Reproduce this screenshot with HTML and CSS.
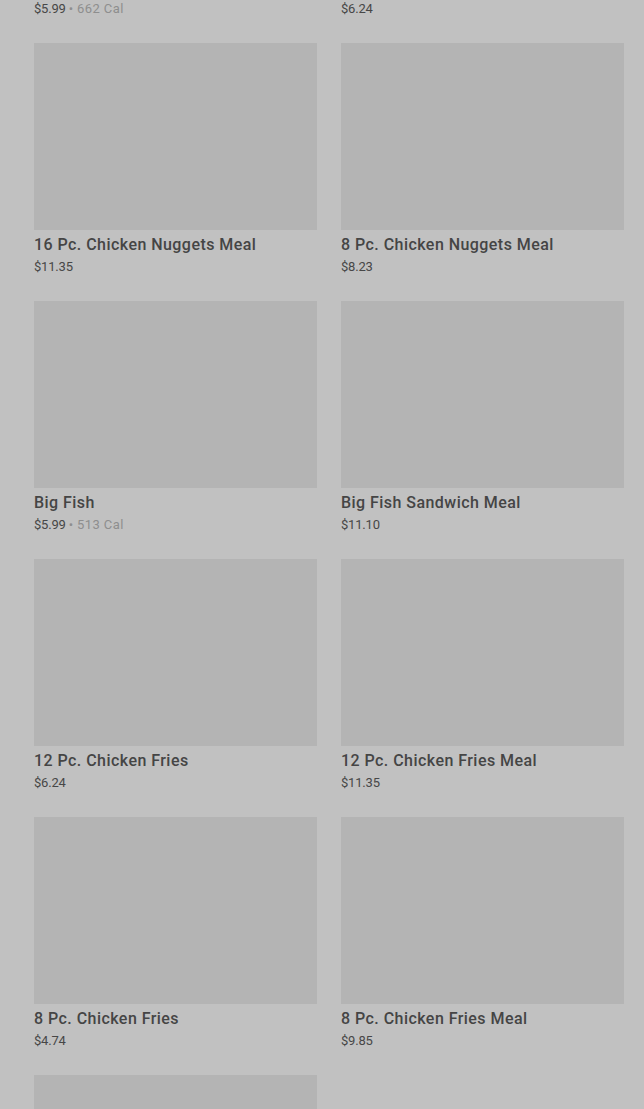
FILE: index.html
```html
<!DOCTYPE html>
<html>
  <head>
    <meta charset="utf-8" />
    <title>Menu</title>
    <link rel="stylesheet" href="styles.css">
  </head>

  <body>
    <div class="menu">
      <div class="item">
        <div class="thumb"></div>
        <div class="name">Original Chicken Sandwich</div>
        <div class="price">$5.99 <span class="cal">• 662 Cal</span></div>
      </div>
      <div class="item">
        <div class="thumb"></div>
        <div class="name">10 Pc. Chicken Nuggets</div>
        <div class="price">$6.24</div>
      </div>
      <div class="item">
        <div class="thumb"></div>
        <div class="name">16 Pc. Chicken Nuggets Meal</div>
        <div class="price">$11.35</div>
      </div>
      <div class="item">
        <div class="thumb"></div>
        <div class="name">8 Pc. Chicken Nuggets Meal</div>
        <div class="price">$8.23</div>
      </div>
      <div class="item">
        <div class="thumb"></div>
        <div class="name">Big Fish</div>
        <div class="price">$5.99 <span class="cal">• 513 Cal</span></div>
      </div>
      <div class="item">
        <div class="thumb"></div>
        <div class="name">Big Fish Sandwich Meal</div>
        <div class="price">$11.10</div>
      </div>
      <div class="item">
        <div class="thumb"></div>
        <div class="name">12 Pc. Chicken Fries</div>
        <div class="price">$6.24</div>
      </div>
      <div class="item">
        <div class="thumb"></div>
        <div class="name">12 Pc. Chicken Fries Meal</div>
        <div class="price">$11.35</div>
      </div>
      <div class="item">
        <div class="thumb"></div>
        <div class="name">8 Pc. Chicken Fries</div>
        <div class="price">$4.74</div>
      </div>
      <div class="item">
        <div class="thumb"></div>
        <div class="name">8 Pc. Chicken Fries Meal</div>
        <div class="price">$9.85</div>
      </div>
      <div class="item">
        <div class="thumb"></div>
        <div class="name">Chicken Jr.</div>
        <div class="price">$2.49</div>
      </div>
    </div>
  </body>
</html>
```

FILE: styles.css
```css
* {
  box-sizing: border-box;
}

html,
body {
  margin: 0;
  padding: 0;
}

body {
  font-family: Roboto, "Liberation Sans", sans-serif;
  background: #c1c1c1;
  color: #424242;
  height: 1109px;
  overflow: hidden;
}

.menu {
  display: grid;
  grid-template-columns: 283px 283px;
  column-gap: 24px;
  row-gap: 24px;
  padding: 0 20px 0 34px;
  margin-top: -215px;
}

.thumb {
  height: 187px;
  background: #b4b4b4;
}

.name {
  margin-top: 5px;
  font-size: 16px;
  font-weight: 500;
  line-height: 20px;
  letter-spacing: 0.45px;
  color: #454545;
}

.price {
  margin-top: 2px;
  font-size: 13px;
  line-height: 20px;
  letter-spacing: -0.2px;
  color: #474747;
}

.cal {
  color: #8e8e8e;
  letter-spacing: 0.4px;
}
```
